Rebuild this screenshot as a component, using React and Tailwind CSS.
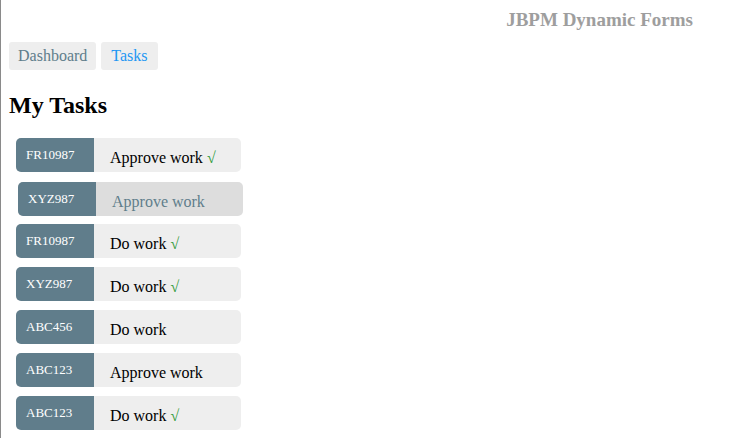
import React from "react";

const tasks = [
  { id: "FR10987", name: "Approve work", done: true },
  { id: "XYZ987", name: "Approve work", done: false, active: true },
  { id: "FR10987", name: "Do work", done: true },
  { id: "XYZ987", name: "Do work", done: true },
  { id: "ABC456", name: "Do work", done: false },
  { id: "ABC123", name: "Approve work", done: false },
  { id: "ABC123", name: "Do work", done: true },
];

function TaskCard({ task }) {
  return (
    <div
      className={
        task.active
          ? "flex h-[34px] w-[225px] rounded-[5px] bg-[#dddddd] translate-x-[2px] translate-y-[1px]"
          : "flex h-[34px] w-[225px] rounded-[5px] bg-[#eeeeee]"
      }
    >
      <div className="flex w-[78px] items-center rounded-l-[5px] bg-[#607d8b] pb-[1px] pl-[10px] text-[13px] text-white">
        {task.id}
      </div>
      <div
        className={
          task.active
            ? "flex items-center pl-[16px] pt-[5px] text-[16px] text-[#607d8b]"
            : "flex items-center pl-[16px] pt-[5px] text-[16px] text-black"
        }
      >
        {task.name}
        {task.done && <span className="ml-[4px] text-[#2f9a3a]">√</span>}
      </div>
    </div>
  );
}

export default function App() {
  return (
    <div className="min-h-[438px] w-[736px] border-l border-[#8a8a8a] bg-white font-['Liberation_Serif',serif]">
      {/* Header */}
      <div className="flex justify-end pr-[43px] pt-[8px]">
        <span className="text-[19px] font-bold leading-[24px] text-[#9e9e9e]">JBPM Dynamic Forms</span>
      </div>

      {/* Nav */}
      <div className="mt-[10px] flex gap-[5px] pl-[8px]">
        <button className="h-[28px] rounded-[3px] bg-[#eeeeee] px-[9px] text-[16px] text-[#607d8b]">
          Dashboard
        </button>
        <button className="h-[28px] rounded-[3px] bg-[#eeeeee] px-[10px] text-[16px] text-[#2196f3]">
          Tasks
        </button>
      </div>

      <h2 className="mt-[21px] pl-[8px] text-[24px] font-bold leading-[28px] text-black">My Tasks</h2>

      {/* Task list */}
      <div className="mt-[19px] flex flex-col gap-[9px] pl-[15px]">
        {tasks.map((t, i) => (
          <TaskCard key={i} task={t} />
        ))}
      </div>
    </div>
  );
}
